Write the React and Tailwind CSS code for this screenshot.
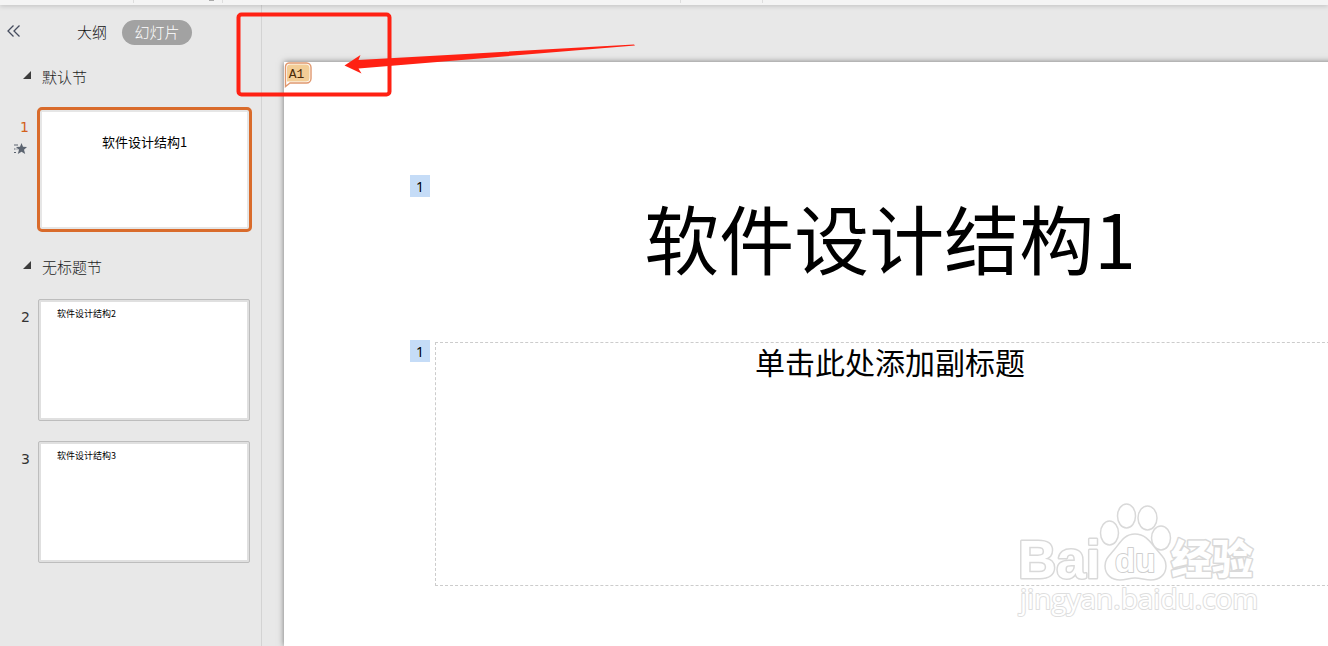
import React from "react";

function CollapseIcon() {
  return (
    <svg width="14" height="14" viewBox="0 0 14 14" fill="none" stroke="#454c5e" strokeWidth="1.3">
      <path d="M6.5 1.500 1 7 6.5 12.500M12.500 1.500 7 7l5.500 5.500" />
    </svg>
  );
}

function AnimationIcon() {
  return (
    <svg width="13" height="12" viewBox="0 0 13 12" fill="#5c6470" aria-hidden="true">
      <path d="M7.500 0 9 3.800 13 4 10 6.700 11.200 11 7.500 8.800 3.800 11 5 6.700 2 4l4-.2z" />
      <path d="M0 1.500h4v1H0zM0 5.500h1.500v1H0zM0 9h2v1H0zM2.500 5.500h1v1h-1z" />
    </svg>
  );
}

function SectionHeader({ children, className }) {
  return (
    <h2 className={`flex h-5 items-center gap-[11px] pl-[23px] text-[15px] leading-5 font-light text-[#222] ${className}`}>
      <svg width="8" height="8" viewBox="0 0 8 8" fill="#3c3c3c" className="mb-1" aria-hidden="true">
        <path d="M8 0v8H0z" />
      </svg>
      {children}
    </h2>
  );
}

function Thumbnail({ number, title, selected }) {
  return (
    <li className="flex">
      <div className={`flex flex-col items-end gap-2 pr-2 font-['DejaVu_Sans'] text-[14px] leading-4 ${selected ? "w-[37px] pt-3 text-[#d3611c]" : "w-[38px] pt-[10px] text-[#333]"}`}>
        <span>{number}</span>
        {selected && <span className="pr-[2px]"><AnimationIcon /></span>}
      </div>
      {selected ? (
        <button className="flex h-[125px] w-[215px] rounded-[5px] border-3 border-[#d96b2b] bg-[#e6e6e6] p-[2px]">
          <span className="h-full w-full bg-white pt-5 text-center text-[13px] leading-5 text-black">{title}</span>
        </button>
      ) : (
        <button className="flex h-[122px] w-[212px] rounded-[2px] border border-[#bdbdbd] bg-[#e0e0e0] p-[2px]">
          <span className="h-full w-full bg-white pt-1 pl-4 text-left text-[9px] leading-4 text-black">{title}</span>
        </button>
      )}
    </li>
  );
}

function Sidebar() {
  return (
    <aside className="w-[262px] shrink-0 border-r border-[#d3d3d3] pt-[15px]">
      <div className="flex h-[25px] items-center pl-[7px] text-[15px] leading-5">
        <button aria-label="收起" className="mb-1">
          <CollapseIcon />
        </button>
        <button className="ml-14 pb-[2px] font-light text-[#111]">大纲</button>
        <button className="ml-[15px] h-[25px] w-[70px] rounded-full bg-[#a2a2a2] pb-[2px] font-light text-white">幻灯片</button>
      </div>
      <SectionHeader className="mt-[22px]">默认节</SectionHeader>
      <ul className="mt-5">
        <Thumbnail number="1" title="软件设计结构1" selected />
      </ul>
      <SectionHeader className="mt-[25px]">无标题节</SectionHeader>
      <ul className="mt-[22px] flex flex-col gap-5">
        <Thumbnail number="2" title="软件设计结构2" />
        <Thumbnail number="3" title="软件设计结构3" />
      </ul>
    </aside>
  );
}

function OrderBadge() {
  return (
    <span className="flex h-[22px] w-5 shrink-0 items-center justify-center bg-[#c5dcf7] pt-[2px] font-[Noto_Sans] text-[14px] leading-5 text-black">
      1
    </span>
  );
}

function CommentTag() {
  return (
    <button className="absolute top-0 left-0 h-[26px] w-7 font-[Liberation_Mono] text-[13px] leading-4 text-[#4b2a08]">
      <svg className="absolute inset-0" width="28" height="26" viewBox="0 0 28 26" aria-hidden="true">
        <path d="M5 1h17.500a4.500 4.500 0 0 1 4.500 4.500v11a4.500 4.500 0 0 1-4.500 4.500H6l-4.500 3.500V5A4 4 0 0 1 5 1z" fill="#fff" stroke="#e0986e" strokeWidth="1.400" />
        <path d="M6 2.500h16a3.500 3.500 0 0 1 3.500 3.500v10a3.500 3.500 0 0 1-3.500 3.500H3V5.500a3 3 0 0 1 3-3z" fill="#f3cd96" />
      </svg>
      <span className="relative mr-[3px]">A1</span>
    </button>
  );
}

function Watermark() {
  return (
    <svg
      className="pointer-events-none absolute top-[500px] left-[1014px]"
      width="248"
      height="124"
      viewBox="0 0 248 124"
      fill="#fff"
      stroke="#d9d9d9"
      strokeWidth="1.500"
      strokeLinejoin="round"
      role="img"
      aria-label="Baidu 经验"
    >
      <text x="4" y="78" fontSize="53" fontFamily="Liberation Sans, sans-serif" fontWeight="700" strokeWidth="3" paintOrder="stroke">Bai</text>
      <ellipse cx="95.500" cy="33" rx="9" ry="12" />
      <ellipse cx="112.500" cy="16" rx="9" ry="12" />
      <ellipse cx="133.500" cy="18" rx="9.500" ry="12" />
      <ellipse cx="147" cy="38" rx="9.500" ry="12" />
      <path d="M121 34c-11 0-15 9-21 16-5 6-9 9-9 16 0 9 7 14 15 14 6 0 9-2 15-2s10 2 16 2c8 0 15-5 15-14 0-7-4-10-9-16-6-7-11-16-22-16z" />
      <text x="101" y="72" fontSize="33" fontFamily="Liberation Sans, sans-serif" fontWeight="700" stroke="#cfcfcf" strokeWidth="2" paintOrder="stroke">du</text>
      <text x="157" y="74" fontSize="41" fontFamily="Noto Sans CJK SC, sans-serif" fontWeight="900" strokeWidth="3" paintOrder="stroke">经验</text>
      <text x="6" y="109" fontSize="28" fontFamily="Open Sans, sans-serif" fontWeight="400" stroke="#dedede" strokeWidth="2" paintOrder="stroke">jingyan.baidu.com</text>
    </svg>
  );
}

function Annotation() {
  return (
    <svg className="pointer-events-none absolute top-0 left-[225px]" width="420" height="110" viewBox="0 0 420 110" aria-hidden="true">
      <rect x="13.500" y="14.500" width="151" height="80" rx="3" fill="none" stroke="#ff2113" strokeWidth="4" />
      <path d="M119.500 65.500 135.500 55 133.500 60 409 44.500 410 45.500 133.500 68.500 136.500 73.500z" fill="#ff2113" />
    </svg>
  );
}

function Slide() {
  return (
    <section className="relative w-[1212px] shrink-0 bg-white pt-[113px] pl-[126px] shadow-[0_0_6px_rgba(0,0,0,0.5)]">
      <CommentTag />
      <div className="flex h-[165px] gap-[5px]">
        <OrderBadge />
        <h1 className="w-[910px] pt-3 text-center text-[75px] leading-[100px] text-black">软件设计结构1</h1>
      </div>
      <div className="flex gap-[5px]">
        <OrderBadge />
        <p className="mt-[2px] h-[244px] w-[910px] border border-dashed border-[#ccc] text-center text-[30px] leading-9 text-black">
          单击此处添加副标题
        </p>
      </div>
    </section>
  );
}

export default function App() {
  return (
    <div className="relative flex min-h-screen flex-col overflow-hidden bg-[#e8e8e8] font-['Noto_Sans_CJK_SC',sans-serif]">
      <header className="relative z-10 flex h-[5px] shrink-0 bg-[#f4f4f4] shadow-[0_1px_5px_rgba(0,0,0,0.18)]">
        <span className="h-[3px] w-[134px] border-r border-[#ddd]" />
        <span className="flex h-[3px] w-[89px] justify-end border-r border-[#ddd] pr-2">
          <span className="h-px w-[5px] bg-[#aaa]" />
        </span>
        <span className="h-[3px] w-[458px] border-r border-[#ddd]" />
        <span className="h-[3px] w-[82px] border-r border-[#ddd]" />
      </header>
      <div className="flex grow">
        <Sidebar />
        <main className="flex min-w-0 grow overflow-hidden pt-[57px] pl-[22px]">
          <Slide />
        </main>
      </div>
      <Watermark />
      <Annotation />
    </div>
  );
}
